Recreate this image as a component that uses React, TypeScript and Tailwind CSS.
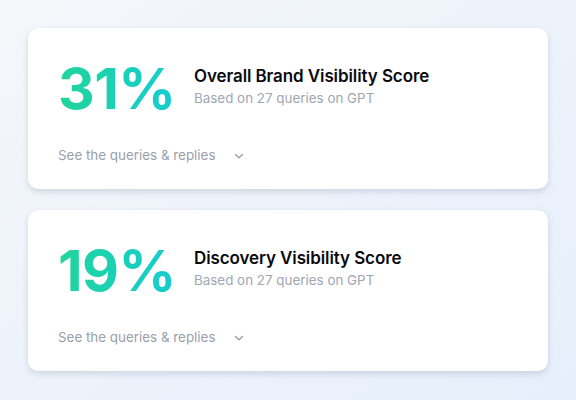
import React from "react";

type Score = { value: string; title: string; subtitle: string };

const scores: Score[] = [
  { value: "31%", title: "Overall Brand Visibility Score", subtitle: "Based on 27 queries on GPT" },
  { value: "19%", title: "Discovery Visibility Score", subtitle: "Based on 27 queries on GPT" },
];

function Chevron() {
  return (
    <svg width="10" height="10" viewBox="0 0 10 10" fill="none" className="ml-[19px] mt-[2px]">
      <path d="M1.5 3.5 L5 6.8 L8.5 3.5" stroke="#9ca3af" strokeWidth="1.5" strokeLinecap="round" strokeLinejoin="round" />
    </svg>
  );
}

function ScoreCard({ s }: { s: Score }) {
  return (
    <div className="h-[161px] rounded-[10px] bg-white shadow-[0_3px_6px_rgba(148,163,184,0.35),0_0_1px_rgba(148,163,184,0.2)] pl-[30px] pt-[27px]">
      <div className="flex items-start">
        <div className="w-[136px] text-[57px] leading-[68px] font-bold tracking-[-0.5px] bg-gradient-to-r from-[#22d49a] to-[#16cbd8] bg-clip-text text-transparent">
          {s.value}
        </div>
        <div className="pt-[9px]">
          <div className="text-[17px] leading-[24px] font-semibold text-[#0b0b0f] tracking-[-0.1px]">{s.title}</div>
          <div className="text-[13.4px] leading-[20px] text-[#a0a6b1] mt-[0px]">{s.subtitle}</div>
        </div>
      </div>
      <div className="mt-[22px] flex items-center text-[13.4px] leading-[20px] text-[#9aa0ab]">
        See the queries &amp; replies
        <Chevron />
      </div>
    </div>
  );
}

export default function App() {
  return (
    <div
      className="w-[576px] h-[400px] bg-gradient-to-br from-[#f4f7fa] to-[#e6effb] px-[28px] pt-[28px] flex flex-col gap-[21px]"
      style={{ fontFamily: "Inter, 'Noto Sans', sans-serif" }}
    >
      {scores.map((s) => (
        <ScoreCard key={s.title} s={s} />
      ))}
    </div>
  );
}
